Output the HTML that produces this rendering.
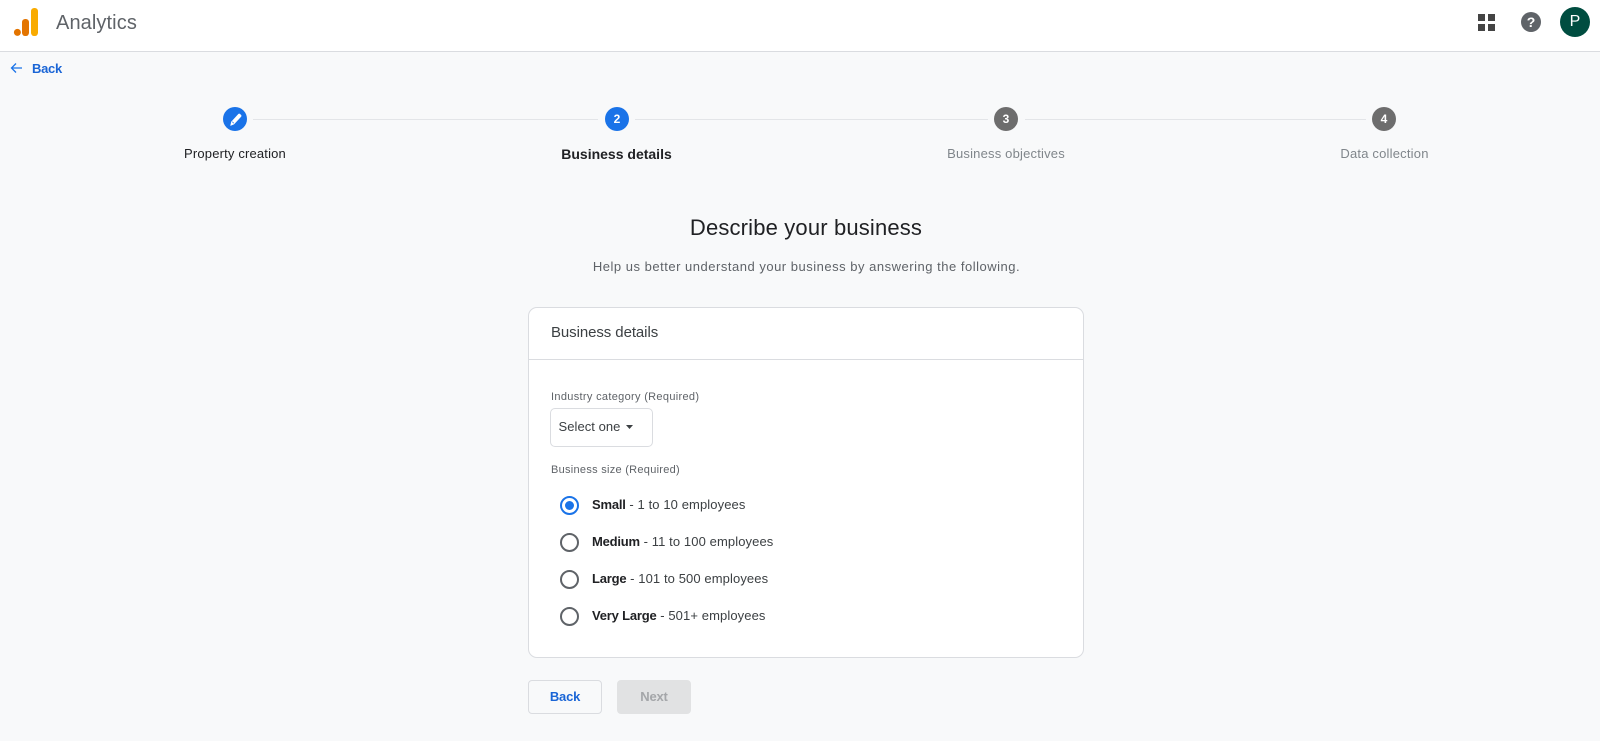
<!DOCTYPE html>
<html lang="en"><head><meta charset="utf-8"><title>Analytics</title>
<style>
*{box-sizing:border-box}
html,body{margin:0;padding:0;width:1600px;height:741px;overflow:hidden;background:#f8f9fa;font-family:"Liberation Sans",Arial,sans-serif;color:#202124}
.a{position:absolute;white-space:nowrap;line-height:20px}
.c{transform:translateX(-50%)}
.hdr{position:absolute;left:0;top:0;width:1600px;height:52px;background:#fff;border-bottom:1px solid #dadce0}
.dot{position:absolute;width:24px;height:24px;border-radius:50%;top:107px;color:#fff;font-size:12px;font-weight:bold;line-height:24px;text-align:center}
.ln{position:absolute;top:119px;height:1px;background:#e3e5e8}
.card{position:absolute;left:528px;top:307px;width:556px;height:351px;background:#fff;border:1px solid #dadce0;border-radius:9px}
.div{position:absolute;left:529px;top:359px;width:554px;height:1px;background:#dadce0}
.sel{position:absolute;left:550px;top:408px;width:103px;height:39px;border:1px solid #dadce0;border-radius:5px;background:#fff}
.r{position:absolute;left:560px;width:19px;height:19px;border-radius:50%;border:2px solid #5f6368;background:#fff}
.r.on{border-color:#1a73e8}
.r.on:after{content:"";position:absolute;left:3px;top:3px;width:9px;height:9px;border-radius:50%;background:#1a73e8}
.t{font-size:13px;left:592px;color:#3c4043;letter-spacing:.1px}
.t b{color:#202124;font-weight:bold;letter-spacing:-.2px}
.btn{position:absolute;top:680px;width:74px;height:34px;border-radius:4px;font-size:13px;font-weight:bold;line-height:32px;text-align:center;letter-spacing:-.2px}
</style></head>
<body>
<div class="hdr"></div>
<svg class="a" style="left:13px;top:7px" width="26" height="30" viewBox="0 0 26 30">
<rect x="18" y="1" width="7" height="28" rx="3.2" fill="#f9ab00"/>
<rect x="9" y="12" width="7" height="17" rx="3.2" fill="#e37400"/>
<circle cx="4.4" cy="25.4" r="3.5" fill="#e37400"/>
</svg>
<div class="a" style="left:56px;top:11px;font-size:20px;line-height:24px;color:#5f6368;letter-spacing:.1px">Analytics</div>
<svg class="a" style="left:1478px;top:14px" width="17" height="17" viewBox="0 0 17 17" fill="#444"><rect width="7" height="7"/><rect x="10" width="7" height="7"/><rect y="10" width="7" height="7"/><rect x="10" y="10" width="7" height="7"/></svg>
<div class="a" style="left:1521px;top:12px;width:20px;height:20px;border-radius:50%;background:#5f6368;color:#fff;font-size:14px;font-weight:bold;line-height:20px;text-align:center">?</div>
<div class="a" style="left:1560px;top:7px;width:30px;height:30px;border-radius:50%;background:#004d40;color:#fff;font-size:16px;line-height:30px;text-align:center">P</div>

<svg class="a" style="left:10px;top:61px" width="13" height="14" viewBox="0 0 13 14" fill="none" stroke="#1a73e8" stroke-width="1.3"><path d="M12 7H1.500M6 2.500L1.500 7L6 11.500"/></svg>
<div class="a" style="left:32px;top:59px;font-size:13px;font-weight:bold;color:#1a65d6;letter-spacing:-.3px">Back</div>

<div class="ln" style="left:253px;width:345px"></div>
<div class="ln" style="left:635px;width:353px"></div>
<div class="ln" style="left:1025px;width:341px"></div>
<div class="dot" style="left:223px;background:#1a73e8"><svg width="24" height="24" viewBox="0 0 24 24" style="display:block"><path d="M7.300 18.900l.9-4.200 7-7.600c.6-.6 1.400-.6 2 0l.8.8c.6.6.6 1.400 0 2l-7 7.500z" fill="#fff"/><path d="M9.200 14.700l1.700 1.600" stroke="#1a73e8" stroke-width=".7" fill="none"/></svg></div>
<div class="dot" style="left:605px;background:#1a73e8">2</div>
<div class="dot" style="left:994px;background:#6d6d6d">3</div>
<div class="dot" style="left:1372px;background:#6d6d6d">4</div>
<div class="a c" style="left:235px;top:144px;font-size:13px;color:#202124;letter-spacing:.17px">Property creation</div>
<div class="a c" style="left:616.500px;top:144px;font-size:14px;font-weight:bold;color:#202124">Business details</div>
<div class="a c" style="left:1006px;top:144px;font-size:13px;color:#80868b;letter-spacing:.19px">Business objectives</div>
<div class="a c" style="left:1384.500px;top:144px;font-size:13px;color:#80868b;letter-spacing:.2px">Data collection</div>

<div class="a c" style="left:806px;top:214px;font-size:22px;line-height:28px;color:#202124;letter-spacing:.16px">Describe your business</div>
<div class="a c" style="left:806.500px;top:257px;font-size:13px;color:#5f6368;letter-spacing:.51px">Help us better understand your business by answering the following.</div>

<div class="card"></div>
<div class="div"></div>
<div class="a" style="left:551px;top:323px;font-size:15px;color:#3c4043;letter-spacing:-.08px">Business details</div>
<div class="a" style="left:551px;top:387px;font-size:11px;color:#5f6368;letter-spacing:.32px">Industry category (Required)</div>
<div class="sel"></div>
<div class="a" style="left:558.500px;top:417px;font-size:13px;color:#3c4043;letter-spacing:.05px">Select one</div>
<svg class="a" style="left:626px;top:425px" width="7" height="4" viewBox="0 0 7 4"><path d="M0 0h7L3.500 4z" fill="#3c4043"/></svg>
<div class="a" style="left:551px;top:460px;font-size:11px;color:#5f6368;letter-spacing:.28px">Business size (Required)</div>

<div class="r on" style="top:495.500px"></div>
<div class="a t" style="top:495px"><b>Small</b> - 1 to 10 employees</div>
<div class="r" style="top:532.500px"></div>
<div class="a t" style="top:532px"><b>Medium</b> - 11 to 100 employees</div>
<div class="r" style="top:569.500px"></div>
<div class="a t" style="top:569px"><b>Large</b> - 101 to 500 employees</div>
<div class="r" style="top:606.500px"></div>
<div class="a t" style="top:606px"><b>Very Large</b> - 501+ employees</div>

<div class="btn" style="left:528px;border:1px solid #dadce0;color:#1a65d6">Back</div>
<div class="btn" style="left:617px;background:#e1e2e3;color:#a4a6a9;border:1px solid #e1e2e3">Next</div>
</body></html>
